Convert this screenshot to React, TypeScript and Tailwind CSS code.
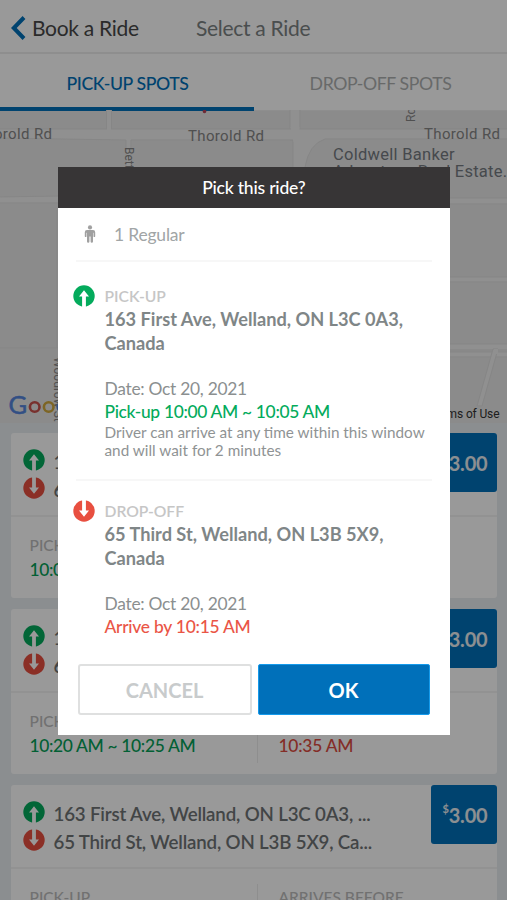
import React from 'react';
import clsx from 'clsx';

interface Ride {
  id: string;
  pickup: string;
  dropoff: string;
  window: string;
  arrival: string;
  price: string;
}

const rides: Ride[] = [
  {
    id: '1',
    pickup: '163 First Ave, Welland, ON L3C 0A3, ...',
    dropoff: '65 Third St, Welland, ON L3B 5X9, Ca...',
    window: '10:00 AM ~ 10:05 AM',
    arrival: '10:15 AM',
    price: '3.00',
  },
  {
    id: '2',
    pickup: '163 First Ave, Welland, ON L3C 0A3, ...',
    dropoff: '65 Third St, Welland, ON L3B 5X9, Ca...',
    window: '10:20 AM ~ 10:25 AM',
    arrival: '10:35 AM',
    price: '3.00',
  },
  {
    id: '3',
    pickup: '163 First Ave, Welland, ON L3C 0A3, ...',
    dropoff: '65 Third St, Welland, ON L3B 5X9, Ca...',
    window: '10:40 AM ~ 10:45 AM',
    arrival: '10:55 AM',
    price: '3.00',
  },
];

function StopIcon({ type, className }: { type: 'up' | 'down'; className?: string }) {
  return (
    <svg
      viewBox="0 0 22 22"
      className={clsx('h-[22px] w-[22px] shrink-0', type === 'down' && 'rotate-180', className)}
    >
      <circle cx="11" cy="11" r="10.7" fill={type === 'up' ? '#04ab5c' : '#e84f40'} />
      <path d="M11 5.2 16 11.4H12.9V22H9.1V11.4H6z" fill="#fff" />
    </svg>
  );
}

function PersonIcon() {
  return (
    <svg viewBox="0 0 12 18" className="h-[18px] w-3" fill="#a0a0a0">
      <circle cx="6" cy="2.4" r="2.1" />
      <path d="M3 5h6a2.2 2.2 0 0 1 2.2 2.2v4a.8.8 0 0 1-1.7 0V7.8H9V16.6a.9.9 0 0 1-2.4 0V11.6H5.4v5a.9.9 0 0 1-2.4 0V7.8h-.5v3.4a.8.8 0 0 1-1.7 0v-4A2.2 2.2 0 0 1 3 5z" />
    </svg>
  );
}

function RideMap() {
  return (
    <svg viewBox="0 110 507 313" className="block h-[313px] w-full bg-[#e8e8e8]">
      <g stroke="#dfdfdf" strokeWidth="1" fill="#f0f0f0">
        <path d="M106.500 105h5v30h-5zM290 105h10v35h-10z" />
        <path d="M-2 129H509V139H325Q309 144 305 167V200H293V140H131V200H126V140L-2 138z" />
        <path d="M-2 197 60 196V203H-2zM440 198H509V204H440z" />
        <path d="M440 277H509V282H440zM440 344H509V350H440zM440 352H509V357H440z" />
        <path d="M493 349H498L482 406H477z" />
      </g>
      <path d="M290.500 127h9v15h-6zM107 127h4v7h-4zM494 349h4v5h-4z" fill="#f0f0f0" />
      <path d="M0 348H60M57 210V348" stroke="#dfdfdf" />
      <circle cx="204.500" cy="111.500" r="1.800" fill="#b8455a" />
      <g fill="#858585" fontFamily="Roboto, sans-serif" fontSize="15">
        <text x="-24" y="139" textLength="76">Thorold Rd</text>
        <text x="188" y="140.500" textLength="76">Thorold Rd</text>
        <text x="424" y="138.500" textLength="76">Thorold Rd</text>
        <g fontSize="16.500" fill="#757b81">
          <text x="333" y="160" textLength="121.500">Coldwell Banker</text>
          <text x="333" y="177" textLength="174">Advantage Real Estate.</text>
        </g>
        <g fontSize="12">
          <text transform="translate(125 147) rotate(90)">Betty Dr</text>
          <text transform="translate(415 122) rotate(-90)">Rd</text>
          <text transform="translate(54 357) rotate(90)">Woodrow St</text>
        </g>
      </g>
      <g fontFamily="Lato, sans-serif">
        <text x="8.500" y="413.500" fill="#5484dc" stroke="#5484dc" strokeWidth="0.500" fontSize="25.500">G</text>
        <g fill="none" strokeWidth="2.600">
          <circle cx="34.700" cy="407" r="4.800" stroke="#c9524e" />
          <circle cx="48.700" cy="407" r="4.800" stroke="#d0a93e" />
          <circle cx="62.500" cy="407" r="4.800" stroke="#5484dc" />
        </g>
      </g>
      <text x="430" y="417.500" textLength="69.500" fill="#333" fontFamily="Roboto, sans-serif" fontSize="12">
        Terms of Use
      </text>
    </svg>
  );
}

function RideCard({ ride }: { ride: Ride }) {
  return (
    <div className="h-[165px] shrink-0 rounded-[3px] bg-white">
      <div className="flex h-[84px] border-b-2 border-[#f4f4f4]">
        <div className="flex min-w-0 flex-1 flex-col pt-[15px] pl-3 text-[18.7px] font-semibold tracking-[-0.17px] text-[#6f7375]">
          <div className="flex h-7 items-center gap-[9px]">
            <StopIcon type="up" className="mb-1" />
            <span className="whitespace-nowrap">{ride.pickup}</span>
          </div>
          <div className="flex h-7 items-center gap-[9px]">
            <StopIcon type="down" className="mb-1" />
            <span className="whitespace-nowrap">{ride.dropoff}</span>
          </div>
        </div>
        <div className="flex h-[59px] w-[66px] items-center justify-center rounded-[3px] bg-[#0070ba] pl-[3px] text-[20px] font-bold tracking-[-0.2px] text-[#e9eef2]">
          <sup className="text-[11px]">$</sup>
          {ride.price}
        </div>
      </div>
      <div className="flex h-[81px] items-start pt-[15px]">
        <div className="h-[55px] w-[247px] border-r border-[#ededed] pt-0.5 pl-[19px]">
          <div className="text-[15.5px] leading-[22px] font-medium text-[#bcbcbc]">PICK-UP</div>
          <div className="pt-0.5 text-[17.4px] leading-6 font-medium tracking-[-0.33px] text-[#04a058]">{ride.window}</div>
        </div>
        <div className="h-[55px] pt-0.5 pl-[21px]">
          <div className="text-[15.5px] leading-[22px] font-medium text-[#bcbcbc]">ARRIVES BEFORE</div>
          <div className="pt-0.5 text-[17.4px] leading-6 font-medium tracking-[-0.23px] text-[#dc4b42]">{ride.arrival}</div>
        </div>
      </div>
    </div>
  );
}

interface StopProps {
  type: 'up' | 'down';
  label: string;
  address: string;
  time: string;
  note?: string;
}

function Stop({ type, label, address, time, note }: StopProps) {
  return (
    <div className="flex gap-[10px] pl-[14.500px]">
      <StopIcon type={type} />
      <div className="w-[328px]">
        <div className="text-[15.7px] leading-[22px] font-semibold tracking-[-0.05px] text-[#c6c6c6]">{label}</div>
        <div className="text-[18.2px] leading-[24.400px] font-bold text-[#7f8687]">
          <div className="whitespace-nowrap">{address}</div>
          <div>Canada</div>
        </div>
        <div className="mt-[21px] text-[17.4px] leading-[23px] tracking-[-0.28px]">
          <div className="text-[#8b8f90]">Date: Oct 20, 2021</div>
          <div className={clsx(type === 'up' ? 'font-medium tracking-[-0.32px] text-[#04ab5c]' : 'font-medium tracking-[-0.24px] text-[#ea5546]')}>
            {time}
          </div>
        </div>
        {note && <div className="w-[324px] text-[15.3px] leading-[18.300px] text-[#8f9394]">{note}</div>}
      </div>
    </div>
  );
}

function ConfirmDialog() {
  return (
    <div className="flex h-[568px] w-[391.500px] flex-col bg-white">
      <div className="flex h-[41px] shrink-0 items-center justify-center bg-[#373536] pt-0.5 text-[17.5px] font-medium tracking-[-0.2px] text-white">
        Pick this ride?
      </div>
      <div className="mx-[18px] flex h-[54px] shrink-0 items-center border-b-2 border-[#f7f7f7] pl-2">
        <PersonIcon />
        <span className="pt-0.5 pl-[18px] text-[17.5px] tracking-[-0.2px] text-[#a1a5a6]">1 Regular</span>
      </div>
      <div className="h-[217px] shrink-0 pt-[23px]">
        <Stop
          type="up"
          label="PICK-UP"
          address="163 First Ave, Welland, ON L3C 0A3,"
          time="Pick-up 10:00 AM ~ 10:05 AM"
          note="Driver can arrive at any time within this window and will wait for 2 minutes"
        />
      </div>
      <div className="mx-[18px] h-0.5 shrink-0 bg-[#f7f7f7]" />
      <div className="h-[183px] shrink-0 pt-[19px]">
        <Stop
          type="down"
          label="DROP-OFF"
          address="65 Third St, Welland, ON L3B 5X9,"
          time="Arrive by 10:15 AM"
        />
      </div>
      <div className="flex gap-[6px] pr-5 pl-[19.500px] text-[20px] font-bold">
        <button className="h-[51px] flex-1 rounded-[3px] border-2 border-[#dfe0e0] text-[#c8cbcc]">CANCEL</button>
        <button className="h-[51px] flex-1 rounded-[2px] border border-[#159aeb] bg-[#0070ba] text-white">OK</button>
      </div>
    </div>
  );
}

export default function App() {
  return (
    <div className="relative h-[900px] w-[507px] overflow-hidden bg-[#e8edf0] font-['Lato',sans-serif]">
      <header className="flex h-[54px] items-center border-b-2 border-[#ededed] bg-white pt-[3px] pl-[11px] text-[21px] tracking-[-0.3px]">
        <svg viewBox="0 0 15 24" className="h-6 w-[15px]" fill="none" stroke="#0070ba" strokeWidth="4">
          <path d="M13 1.500 2.800 12 13 22.500" />
        </svg>
        <span className="w-[164px] pl-[6px] text-[#484848]">Book a Ride</span>
        <span className="pl-[6px] text-[#7c8283]">Select a Ride</span>
      </header>
      <div className="flex h-[57px] bg-white text-[17.7px] tracking-[-0.4px]">
        <div className="flex flex-1 items-center justify-center border-b-4 border-[#0070ba] pt-[7px] pl-px font-medium text-[#0070ba]">
          PICK-UP SPOTS
        </div>
        <div className="flex flex-1 items-center justify-center border-b border-[#ededed] pt-1 text-[#aeb0b0]">
          DROP-OFF SPOTS
        </div>
      </div>
      <div className="-mt-px h-[313px] overflow-hidden">
        <RideMap />
      </div>
      <div className="flex flex-col gap-[11px] px-[10.500px] pt-[10px]">
        {rides.map((ride) => (
          <RideCard key={ride.id} ride={ride} />
        ))}
      </div>
      <div className="absolute inset-0 flex bg-black/40 pt-[167px] pl-[58px]">
        <ConfirmDialog />
      </div>
    </div>
  );
}
